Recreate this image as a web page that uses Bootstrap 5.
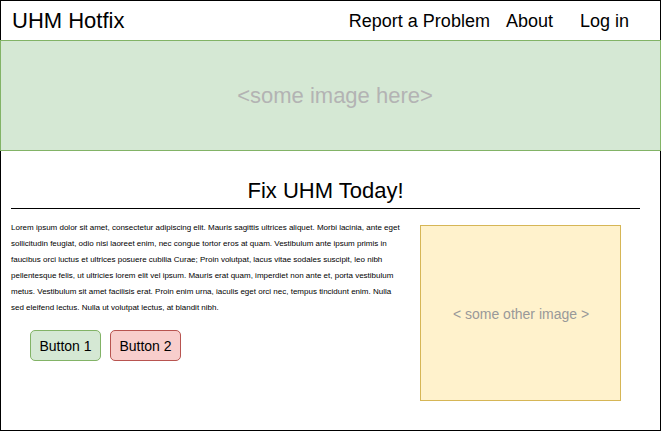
<!DOCTYPE html>
<html lang="en">
<head>
<meta charset="utf-8">
<meta name="viewport" content="width=device-width, initial-scale=1">
<title>UHM Hotfix</title>
<link href="https://cdn.jsdelivr.net/npm/bootstrap@5.3.0/dist/css/bootstrap.min.css" rel="stylesheet">
<style>
  body { font-family: "Liberation Sans", Arial, sans-serif; color: #000; }
  .page-frame { border: 1px solid #000; }
  .site-nav { height: 39px; padding: 0 31px 0 11px; }
  .site-nav .navbar-brand { font-size: 22px; line-height: 26px; color: #000; }
  .site-nav .nav-link { font-size: 18px; line-height: 22px; color: #000; }
  .login-item { margin-left: 27px; }
  .hero { height: 111px; margin: 0 -1px; padding-left: 9px; background: #d5e8d4; border: 1px solid #82b366; color: #b3b3b3; font-size: 22px; }
  .main-area { padding: 27px 20px 8px 10px; }
  .headline { font-size: 22px; line-height: 26px; padding-bottom: 4px; border-bottom: 1px solid #000; }
  .content-row { padding-top: 11px; gap: 18px; }
  .intro { font-size: 8px; line-height: 16px; }
  .actions { gap: 9px; padding: 14px 0 0 19px; }
  .actions .btn { width: 71px; font-size: 14px; line-height: 21px; padding: 5px 0 3px; border-radius: 5px; color: #000; }
  .btn-green { background: #d5e8d4; border-color: #82b366; }
  .btn-red { background: #f8cecc; border-color: #b85450; }
  .side-image { flex: 0 0 201px; height: 176px; margin: 5px 19px 20px 0; padding: 2px 0 0 1px; background: #fff2cc; border: 1px solid #d6b656; color: #999; font-size: 14px; }
</style>
</head>
<body>
<div class="page-frame min-vh-100">
  <nav class="navbar navbar-expand site-nav flex-nowrap" aria-label="Main">
    <a class="navbar-brand p-0 me-auto" href="#">UHM Hotfix</a>
    <ul class="navbar-nav text-nowrap">
      <li class="nav-item"><a class="nav-link p-0" href="#">Report a Problem</a></li>
      <li class="nav-item ms-3"><a class="nav-link p-0" href="#">About</a></li>
      <li class="nav-item login-item"><a class="nav-link p-0" href="#">Log in</a></li>
    </ul>
  </nav>
  <div class="hero d-flex align-items-center justify-content-center">&lt;some image here&gt;</div>
  <main class="main-area">
    <h1 class="headline text-center fw-normal mb-0">Fix UHM Today!</h1>
    <div class="content-row d-flex">
      <div class="flex-fill">
        <p class="intro mb-0">Lorem ipsum dolor sit amet, consectetur adipiscing elit. Mauris sagittis ultrices aliquet. Morbi lacinia, ante eget sollicitudin feugiat, odio nisi laoreet enim, nec congue tortor eros at quam. Vestibulum ante ipsum primis in faucibus orci luctus et ultrices posuere cubilia Curae; Proin volutpat, lacus vitae sodales suscipit, leo nibh pellentesque felis, ut ultricies lorem elit vel ipsum. Mauris erat quam, imperdiet non ante et, porta vestibulum metus. Vestibulum sit amet facilisis erat. Proin enim urna, iaculis eget orci nec, tempus tincidunt enim. Nulla sed eleifend lectus. Nulla ut volutpat lectus, at blandit nibh.</p>
        <div class="actions d-flex">
          <button type="button" class="btn btn-green">Button 1</button>
          <button type="button" class="btn btn-red">Button 2</button>
        </div>
      </div>
      <div class="side-image d-flex align-items-center justify-content-center">&lt; some other image &gt;</div>
    </div>
  </main>
</div>
<script src="https://cdn.jsdelivr.net/npm/bootstrap@5.3.0/dist/js/bootstrap.bundle.min.js"></script>
</body>
</html>
